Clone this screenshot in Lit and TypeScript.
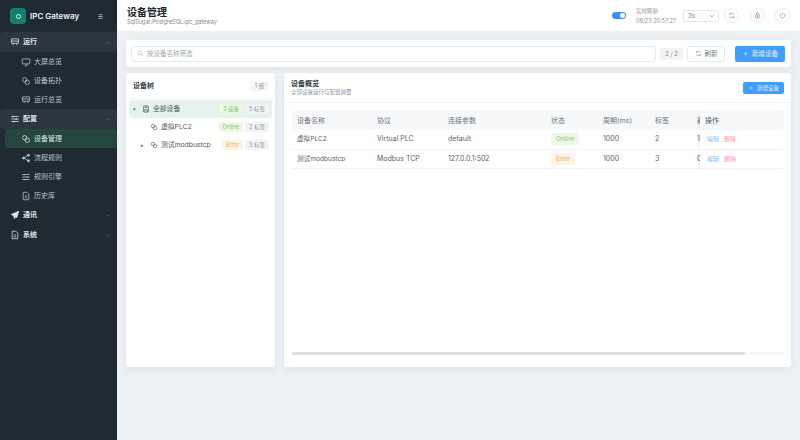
import { LitElement, html, css, svg } from "lit";
import { customElement } from "lit/decorators.js";

const icons: Record<string, unknown> = {
  monitor: svg`<rect x="2" y="3" width="12" height="8" rx="1"/><path d="M6 14h4M8 11v3"/>`,
  link: svg`<circle cx="6" cy="6" r="3.5"/><circle cx="10" cy="10" r="3.5"/>`,
  cart: svg`<path d="M2.5 3h11v7h-11zM2.5 6.5h11M5 10v3M11 10v3"/>`,
  sliders: svg`<path d="M2 4h12M2 8h12M2 12h12"/><path d="M5 3v2M10 7v2M6 11v2" stroke-width="2"/>`,
  share: svg`<circle cx="12" cy="3.5" r="1.6" fill="currentColor"/><circle cx="4" cy="8" r="1.6" fill="currentColor"/><circle cx="12" cy="12.5" r="1.6" fill="currentColor"/><path d="M12 3.5 4 8l8 4.5"/>`,
  doc: svg`<path d="M3.5 2h6l3 3v9h-9zM6 8h4M6 11h4"/>`,
  send: svg`<path d="M14 2 2 7l4 2 1 5 2-3 2 1z" fill="currentColor"/>`,
  server: svg`<path d="M3.5 2h9v12h-9zM3.5 10h9M6 5h4" stroke-width="1.6"/>`,
  search: svg`<circle cx="7" cy="7" r="4.5"/><path d="m10.5 10.5 3 3"/>`,
  refresh: svg`<path d="M13 6.5A5.2 5.2 0 0 0 3.6 5M3 9.5A5.2 5.2 0 0 0 12.4 11"/><path d="M3.5 2.5V5.2H6.2M12.5 13.5v-2.7H9.8"/>`,
  lock: svg`<rect x="3" y="7" width="10" height="7" rx="1.5"/><path d="M5.5 7V4.5a2.5 2.5 0 0 1 5 0V7"/><circle cx="8" cy="10.5" r="1" fill="currentColor"/>`,
  power: svg`<path d="M5 3.5a5.5 5.5 0 1 0 6 0M8 2v5"/>`,
  plus: svg`<path d="M8 3v10M3 8h10"/>`,
  chevronDown: svg`<path d="m4 6 4 4 4-4"/>`,
  chevronUp: svg`<path d="m4 10 4-4 4 4"/>`,
  menu: svg`<path d="M3 4h10M3 8h10M3 12h10" stroke-width="1.8"/>`,
};

const icon = (name: string, size: number) => html`<svg
  width=${size}
  height=${size}
  viewBox="0 0 16 16"
  fill="none"
  stroke="currentColor"
  stroke-width="1.2"
>
  ${icons[name]}
</svg>`;

const nav = [
  { label: "运行", icon: "cart", open: true, children: [["大屏总览", "monitor"], ["设备拓扑", "link"], ["运行总览", "cart"]] },
  { label: "配置", icon: "sliders", open: true, children: [["设备管理", "link", true], ["流程规则", "share"], ["规则引擎", "sliders"], ["历史库", "doc"]] },
  { label: "通讯", icon: "send", open: false, children: [] },
  { label: "系统", icon: "doc", open: false, children: [] },
];

const devices = [
  { name: "虚拟PLC2", protocol: "Virtual PLC", conn: "default", status: "Online", cycle: "1000", tags: "2", extra: "1" },
  { name: "测试modbustcp", protocol: "Modbus TCP", conn: "127.0.0.1:502", status: "Error", cycle: "1000", tags: "3", extra: "0" },
];

@customElement("app-root")
export class AppRoot extends LitElement {
  static styles = css`
    :host {
      display: flex;
      width: 800px;
      height: 440px;
      overflow: hidden;
      background: #edf1f4;
      color: #2b3640;
      font-family: Inter, "Noto Sans CJK SC", sans-serif;
      font-size: 7px;
      line-height: 10px;
    }
    svg {
      display: block;
      flex: none;
    }

    .sidebar {
      width: 117px;
      flex: none;
      background: #1f2a33;
      color: #c4ccd2;
    }
    .brand {
      display: flex;
      align-items: center;
      height: 32px;
      padding-left: 10px;
      color: #eef2f4;
    }
    .logo {
      display: flex;
      align-items: center;
      justify-content: center;
      width: 16px;
      height: 16px;
      border-radius: 4px;
      background: #15806f;
      margin-right: 4px;
    }
    .logo i {
      width: 3px;
      height: 3px;
      border: 1.5px solid #d7efe9;
      border-radius: 50%;
    }
    .brand b {
      font-size: 8px;
      font-weight: 600;
      flex: 1;
    }
    .brand svg {
      margin-right: 13px;
      color: #b9c2c8;
    }
    .group {
      display: flex;
      align-items: center;
      gap: 3px;
      height: 20px;
      padding: 0 5px 0 10px;
      font-weight: 600;
      color: #dfe5e9;
    }
    .group.open {
      background: #2b3640;
      border-radius: 4px;
    }
    .group span {
      flex: 1;
    }
    .group .caret {
      color: #6f7c86;
    }
    .children {
      padding-left: 5px;
    }
    .child {
      display: flex;
      align-items: center;
      gap: 3px;
      height: 19px;
      padding-left: 16px;
      border-radius: 4px;
      color: #bcc5cb;
    }
    .child.active {
      background: #24463f;
      color: #d8e8e3;
    }

    .main {
      flex: 1;
      min-width: 0;
      display: flex;
      flex-direction: column;
    }
    .header {
      display: flex;
      align-items: center;
      height: 31px;
      padding: 0 10px;
      background: #fff;
      flex: none;
    }
    .title {
      flex: 1;
    }
    .title h1 {
      margin: 0;
      font-size: 10px;
      line-height: 12px;
      font-weight: 700;
      color: #1c252c;
    }
    .title p {
      margin: 1px 0 0;
      font-size: 5.5px;
      line-height: 7px;
      color: #7d8790;
    }
    .switch {
      width: 14px;
      height: 7px;
      border-radius: 4px;
      background: #3d8ff0;
      margin-right: 10px;
      position: relative;
    }
    .switch::after {
      content: "";
      position: absolute;
      right: 1px;
      top: 1px;
      width: 5px;
      height: 5px;
      border-radius: 50%;
      background: #fff;
    }
    .live {
      width: 47px;
      padding-top: 1px;
      font-size: 5.5px;
      line-height: 8px;
      color: #8b949c;
    }
    .live div + div {
      margin-top: 2px;
    }
    .select {
      display: flex;
      align-items: center;
      justify-content: space-between;
      box-sizing: border-box;
      width: 36px;
      height: 12px;
      padding: 0 2px 0 4px;
      border: 1px solid #e4e8eb;
      border-radius: 2px;
      font-size: 6px;
      color: #6f7a83;
      margin-right: 5px;
    }
    .round {
      display: flex;
      align-items: center;
      justify-content: center;
      box-sizing: border-box;
      width: 15px;
      height: 15px;
      border: 1px solid #e7eaed;
      border-radius: 50%;
      color: #707a83;
    }
    .round + .round {
      margin-left: 10.5px;
    }

    .content {
      margin: 0 9px;
      padding-top: 9px;
      display: flex;
      flex-direction: column;
      gap: 6px;
    }
    .card {
      background: #fff;
      border-radius: 3px;
      box-shadow: 0 2px 6px rgba(60, 80, 100, 0.08);
    }
    .filter {
      display: flex;
      align-items: center;
      height: 27px;
      padding: 0 6px 0 5px;
      box-sizing: border-box;
    }
    .input {
      flex: 1;
      display: flex;
      align-items: center;
      gap: 3px;
      box-sizing: border-box;
      height: 16px;
      padding: 0 5px;
      border: 1px solid #e8ebee;
      border-radius: 3px;
      font-size: 6.5px;
      color: #a2aab1;
    }
    .count {
      margin-left: 4px;
      padding: 0 5px;
      height: 12px;
      line-height: 12px;
      background: #f1f3f5;
      border-radius: 2px;
      font-size: 6px;
      color: #858e96;
    }
    .btn {
      display: flex;
      align-items: center;
      justify-content: center;
      gap: 3px;
      box-sizing: border-box;
      border-radius: 2px;
      font-size: 6.5px;
    }
    .btn.ghost {
      width: 38px;
      height: 16px;
      margin-left: 4px;
      border: 1px solid #e8ebee;
      color: #6f7a83;
    }
    .btn.primary {
      width: 50px;
      height: 16px;
      margin-left: 10px;
      background: #409eff;
      color: #e6f2ff;
    }
    .btn.small {
      width: 41px;
      height: 12px;
      background: #409eff;
      color: #e6f2ff;
      font-size: 5.5px;
    }

    .panels {
      display: flex;
      gap: 9px;
      height: 294px;
    }
    .tree {
      width: 149px;
      flex: none;
    }
    .tree-head {
      display: flex;
      align-items: center;
      justify-content: space-between;
      height: 26px;
      padding: 0 7px;
      border-bottom: 1px solid #f3f5f6;
      box-sizing: border-box;
      font-weight: 600;
      color: #333d46;
    }
    .pill {
      padding: 0 4px;
      height: 10px;
      line-height: 10px;
      border-radius: 2px;
      background: #f1f3f5;
      color: #8d959c;
      font-size: 5.5px;
      font-weight: 400;
      white-space: nowrap;
    }
    .pill.green {
      background: #ecf8e4;
      color: #82c95f;
    }
    .pill.orange {
      background: #fdf4e6;
      color: #eba64d;
    }
    .tree-body {
      padding: 1px 3px;
    }
    .node {
      display: flex;
      align-items: center;
      gap: 2px;
      height: 18px;
      border-radius: 3px;
      color: #4e5962;
    }
    .node.root {
      background: #e6f2ee;
    }
    .node.leaf {
      padding-left: 21px;
    }
    .node.branch {
      padding-left: 8px;
    }
    .node .dot {
      width: 11px;
      flex: none;
      text-align: center;
      font-size: 5px;
      color: #59636c;
    }
    .node .name {
      flex: 1;
      margin-left: 1px;
      white-space: nowrap;
      font-size: 6.8px;
    }
    .node .pill:last-child {
      margin-right: 3px;
    }

    .overview {
      flex: 1;
      min-width: 0;
      position: relative;
    }
    .ov-head {
      display: flex;
      align-items: center;
      justify-content: space-between;
      box-sizing: border-box;
      height: 30px;
      padding: 0 7px;
      border-bottom: 1px solid #f3f5f6;
    }
    .ov-head h2 {
      margin: 0;
      font-size: 7px;
      line-height: 10px;
      font-weight: 600;
      color: #2e3841;
    }
    .ov-head p {
      margin: 0;
      font-size: 5.5px;
      line-height: 7px;
      color: #8d959c;
    }
    .table {
      margin: 8px 7px 0 8px;
      display: grid;
      grid-template-columns: 80px 71px 103px 52px 52px 42px 8px 1fr;
    }
    .cell {
      display: flex;
      align-items: center;
      box-sizing: border-box;
      height: 19.5px;
      padding-left: 5px;
      border-bottom: 1px solid #f0f2f4;
      color: #5a646d;
      overflow: hidden;
      white-space: nowrap;
    }
    .cell.name {
      font-size: 6.6px;
    }
    .cell.head {
      height: 19px;
      background: #f6f8f9;
      color: #6d7780;
      border-bottom: 0;
    }
    .cell.ops {
      gap: 5px;
      padding-left: 7px;
      box-shadow: -3px 0 4px -2px rgba(0, 0, 0, 0.12);
      background: #fff;
      font-size: 6px;
    }
    .cell.head.ops {
      background: #f6f8f9;
      color: #4e5962;
      font-size: 7px;
      padding-left: 5px;
    }
    .ops a {
      color: #84bdfa;
    }
    .ops a + a {
      color: #f7a0a7;
    }
    .tag {
      padding: 0 5px;
      height: 12px;
      line-height: 12px;
      border-radius: 2px;
      font-size: 6px;
    }
    .tag.green {
      background: #edf8e6;
      color: #8acb68;
    }
    .tag.orange {
      background: #fdf4e7;
      color: #eda950;
    }
    .scrollbar {
      position: absolute;
      left: 8px;
      right: 7px;
      bottom: 12px;
      height: 3px;
      background: #f6f7f8;
    }
    .scrollbar i {
      display: block;
      width: 453px;
      height: 3px;
      border-radius: 2px;
      background: #dcdfe3;
    }
  `;

  renderNav() {
    return nav.map(
      (g) => html`
        <div class="group ${g.open ? "open" : ""}">
          ${icon(g.icon, 10)}<span>${g.label}</span>
          <div class="caret">${icon(g.open ? "chevronUp" : "chevronDown", 7)}</div>
        </div>
        ${g.children.length
          ? html`<div class="children">
              ${g.children.map(
                (c) => html`<div class="child ${c[2] ? "active" : ""}">
                  ${icon(c[1] as string, 10)}<span>${c[0]}</span>
                </div>`,
              )}
            </div>`
          : ""}
      `,
    );
  }

  renderHeader() {
    return html`<div class="header">
      <div class="title">
        <h1>设备管理</h1>
        <p>SqlSugar:PostgreSQL:ipc_gateway</p>
      </div>
      <div class="switch"></div>
      <div class="live">
        <div>实时刷新</div>
        <div>06/23 20:57:27</div>
      </div>
      <div class="select">3s ${icon("chevronDown", 8)}</div>
      <div class="round">${icon("refresh", 7)}</div>
      <div class="round">${icon("lock", 7)}</div>
      <div class="round">${icon("power", 7)}</div>
    </div>`;
  }

  renderTree() {
    return html`<div class="card tree">
      <div class="tree-head"><span>设备树</span><span class="pill">1 组</span></div>
      <div class="tree-body">
        <div class="node root">
          <span class="dot">▾</span>${icon("server", 8)}
          <span class="name">全部设备</span>
          <span class="pill green">2 设备</span><span class="pill">5 标签</span>
        </div>
        <div class="node leaf">
          ${icon("link", 8)}<span class="name">虚拟PLC2</span>
          <span class="pill green">Online</span><span class="pill">2 标签</span>
        </div>
        <div class="node branch">
          <span class="dot">▸</span>${icon("link", 8)}
          <span class="name">测试modbustcp</span>
          <span class="pill orange">Error</span><span class="pill">3 标签</span>
        </div>
      </div>
    </div>`;
  }

  renderTable() {
    const heads = ["设备名称", "协议", "连接参数", "状态", "周期(ms)", "标签", "最"];
    return html`<div class="table">
      ${heads.map((h) => html`<div class="cell head">${h}</div>`)}
      <div class="cell head ops">操作</div>
      ${devices.map(
        (d) => html`
          <div class="cell name">${d.name}</div>
          <div class="cell">${d.protocol}</div>
          <div class="cell">${d.conn}</div>
          <div class="cell">
            <span class="tag ${d.status === "Online" ? "green" : "orange"}">${d.status}</span>
          </div>
          <div class="cell">${d.cycle}</div>
          <div class="cell">${d.tags}</div>
          <div class="cell">${d.extra}</div>
          <div class="cell ops"><a>编辑</a><a>删除</a></div>
        `,
      )}
    </div>`;
  }

  render() {
    return html`
      <aside class="sidebar">
        <div class="brand">
          <div class="logo"><i></i></div>
          <b>IPC Gateway</b>${icon("menu", 7)}
        </div>
        ${this.renderNav()}
      </aside>
      <div class="main">
        ${this.renderHeader()}
        <div class="content">
          <div class="card filter">
            <div class="input">${icon("search", 7)}按设备名称筛选</div>
            <span class="count">2 / 2</span>
            <div class="btn ghost">${icon("refresh", 7)}刷新</div>
            <div class="btn primary">${icon("plus", 7)}新增设备</div>
          </div>
          <div class="panels">
            ${this.renderTree()}
            <div class="card overview">
              <div class="ov-head">
                <div>
                  <h2>设备概览</h2>
                  <p>全部设备运行与配置摘要</p>
                </div>
                <div class="btn small">${icon("plus", 6)}新增设备</div>
              </div>
              ${this.renderTable()}
              <div class="scrollbar"><i></i></div>
            </div>
          </div>
        </div>
      </div>
    `;
  }
}
